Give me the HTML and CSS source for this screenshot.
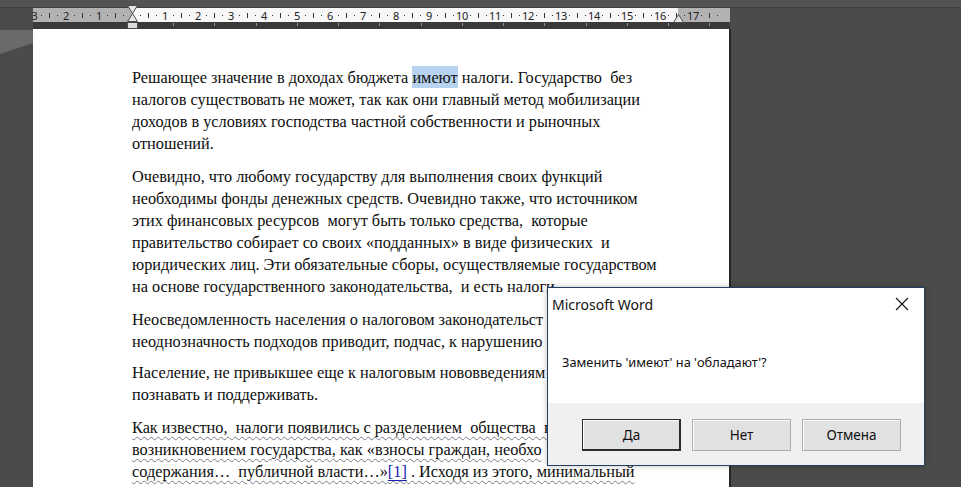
FILE: index.html
```html
<!DOCTYPE html>
<html lang="ru">
<head>
<meta charset="utf-8">
<title>Microsoft Word</title>
<link rel="stylesheet" href="styles.css">
</head>
<body>
<div class="top"></div>
<div class="ruler-row">
  <div class="ruler">
    <div class="marks">
      <span class="n">3</span><span class="q"></span><span class="h"></span><span class="q"></span>
      <span class="n">2</span><span class="q"></span><span class="h"></span><span class="q"></span>
      <span class="n">1</span><span class="q"></span><span class="h"></span><span class="q"></span>
      <span class="n"></span><span class="q"></span><span class="h"></span><span class="q"></span>
      <span class="n">1</span><span class="q"></span><span class="h"></span><span class="q"></span>
      <span class="n">2</span><span class="q"></span><span class="h"></span><span class="q"></span>
      <span class="n">3</span><span class="q"></span><span class="h"></span><span class="q"></span>
      <span class="n">4</span><span class="q"></span><span class="h"></span><span class="q"></span>
      <span class="n">5</span><span class="q"></span><span class="h"></span><span class="q"></span>
      <span class="n">6</span><span class="q"></span><span class="h"></span><span class="q"></span>
      <span class="n">7</span><span class="q"></span><span class="h"></span><span class="q"></span>
      <span class="n">8</span><span class="q"></span><span class="h"></span><span class="q"></span>
      <span class="n">9</span><span class="q"></span><span class="h"></span><span class="q"></span>
      <span class="n">10</span><span class="q"></span><span class="h"></span><span class="q"></span>
      <span class="n">11</span><span class="q"></span><span class="h"></span><span class="q"></span>
      <span class="n">12</span><span class="q"></span><span class="h"></span><span class="q"></span>
      <span class="n">13</span><span class="q"></span><span class="h"></span><span class="q"></span>
      <span class="n">14</span><span class="q"></span><span class="h"></span><span class="q"></span>
      <span class="n">15</span><span class="q"></span><span class="h"></span><span class="q"></span>
      <span class="n">16</span><span class="q"></span><span class="h"></span><span class="q"></span>
      <span class="n">17</span><span class="q"></span><span class="h"></span><span class="q"></span>
    </div>
  </div>
  <div class="tabs"></div>
  <svg class="indent-left" width="12" height="24" viewBox="0 0 12 24">
    <polygon points="0.5,0.5 10.5,0.5 5.5,8.5" fill="#e6e6e6" stroke="#4a4a4a"/>
    <polygon points="5.5,8.5 10.5,16.5 0.5,16.5" fill="#e6e6e6" stroke="#4a4a4a"/>
    <rect x="0.5" y="17.5" width="10" height="6" fill="#dcdcdc" stroke="#4a4a4a"/>
  </svg>
  <svg class="indent-right" width="12" height="10" viewBox="0 0 12 10">
    <polygon points="5.5,0.5 10.5,8.5 0.5,8.5" fill="#e6e6e6" stroke="#4a4a4a"/>
  </svg>
</div>
<div class="workspace">
  <div class="gutter">
    <svg width="33" height="40" viewBox="0 0 33 40"><polygon points="0,1 33,1 33,14 0,25" fill="#6a6a6a"/></svg>
  </div>
  <div class="page">
    <div class="para">
      <div class="ln">Решающее значение в доходах бюджета <span class="sel">имеют</span> налоги. Государство  без</div>
      <div class="ln">налогов существовать не может, так как они главный метод мобилизации</div>
      <div class="ln">доходов в условиях господства частной собственности и рыночных</div>
      <div class="ln">отношений.</div>
    </div>
    <div class="para">
      <div class="ln">Очевидно, что любому государству для выполнения своих функций</div>
      <div class="ln">необходимы фонды денежных средств. Очевидно также, что источником</div>
      <div class="ln">этих финансовых ресурсов  могут быть только средства,  которые</div>
      <div class="ln">правительство собирает со своих «подданных» в виде физических  и</div>
      <div class="ln">юридических лиц. Эти обязательные сборы, осуществляемые государством</div>
      <div class="ln">на основе государственного законодательства,  и есть налоги.</div>
    </div>
    <div class="para p3">
      <div class="ln">Неосведомленность населения о налоговом законодательст</div>
      <div class="ln">неоднозначность подходов приводит, подчас, к нарушению</div>
    </div>
    <div class="para">
      <div class="ln">Население, не привыкшее еще к налоговым нововведениям</div>
      <div class="ln">познавать и поддерживать.</div>
    </div>
    <div class="para wavy">
      <div class="ln">Как известно,  налоги появились с разделением  общества  на</div>
      <div class="ln">возникновением государства, как «взносы граждан, необхо</div>
      <div class="ln">содержания…  публичной власти…»<a class="ref">[1]</a> . Исходя из этого, минимальный</div>
    </div>
  </div>
</div>

<div class="dialog">
  <div class="dlg-body">
    <div class="dlg-title">
      <span>Microsoft Word</span>
      <svg class="close" width="14" height="14" viewBox="0 0 14 14"><path d="M1 1 L13 13 M13 1 L1 13" stroke="#111" stroke-width="1.1" fill="none"/></svg>
    </div>
    <div class="dlg-msg">Заменить 'имеют' на 'обладают'?</div>
  </div>
  <div class="dlg-buttons">
    <button class="btn default">Да</button>
    <button class="btn">Нет</button>
    <button class="btn">Отмена</button>
  </div>
</div>
</body>
</html>
```
FILE: styles.css
```css
* { box-sizing: border-box; }
html, body {
  margin: 0;
  padding: 0;
  width: 961px;
  height: 487px;
  overflow: hidden;
  background: #4b4b4b;
}
.top {
  height: 8px;
  background: #535353;
  border-bottom: 1px solid #3f3f3f;
}
.ruler-row {
  position: relative;
  margin-left: 33px;
  width: 697px;
}
.ruler {
  height: 14px;
  overflow: hidden;
  background: linear-gradient(to right, #b2b2b2 0, #b2b2b2 99px, #f7f7f7 99px, #f7f7f7 645px, #b2b2b2 645px);
}
.marks {
  display: flex;
  margin-left: -1px;
  height: 14px;
}
.marks span {
  flex: none;
  width: 8.25px;
  height: 14px;
  display: flex;
  align-items: center;
  justify-content: center;
}
.marks span:first-child {
  width: 5.1px;
}
.n {
  font-family: "Noto Sans", "DejaVu Sans", sans-serif;
  font-size: 11px;
  color: #222;
  white-space: nowrap;
  letter-spacing: -0.3px;
}
.q::before {
  content: "";
  width: 1px;
  height: 1px;
  background: #333;
}
.h::before {
  content: "";
  width: 1px;
  height: 5px;
  background: #333;
}
.tabs {
  height: 7px;
  background-color: #3a3a3a;
  background-image: repeating-linear-gradient(to right, #8c8c8c 0, #8c8c8c 1px, transparent 1px, transparent 41.25px);
  background-size: 537px 3px;
  background-position: 140px 1px;
  background-repeat: no-repeat;
}
.indent-left {
  position: absolute;
  left: 94px;
  top: -3px;
}
.indent-right {
  position: absolute;
  left: 640px;
  top: 6px;
}
.workspace {
  display: flex;
  align-items: flex-start;
}
.gutter {
  width: 33px;
  flex: none;
}
.gutter svg { display: block; }
.page {
  width: 698px;
  height: 470px;
  background: #fff;
  border-right: 2px solid #262626;
  padding: 38px 0 0 99px;
  font-family: "Liberation Serif", "Times New Roman", serif;
  font-size: 16.3px;
  line-height: 22px;
  color: #0e0e0e;
}
.para { margin-bottom: 11px; }
.para.p3 { margin-bottom: 9px; }
.ln { white-space: pre; }
.sel {
  background: #b7d3f0;
  padding: 2px 0 1px;
}
.wavy .ln {
  text-decoration: underline wavy #7a7a8a;
  text-decoration-thickness: 1px;
  text-underline-offset: 3px;
}
.ref {
  color: #1a24b0;
  text-decoration: underline;
}
.dialog {
  position: absolute;
  left: 547px;
  top: 287px;
  width: 378px;
  height: 179px;
  border: 1px solid #1f3f66;
  background: #fff;
  display: flex;
  flex-direction: column;
  font-family: "Noto Sans", "Open Sans", sans-serif;
  color: #111;
  box-shadow: 0 0 6px rgba(0,0,0,0.25);
}
.dlg-body {
  height: 115px;
  flex: none;
}
.dlg-title {
  display: flex;
  align-items: center;
  justify-content: space-between;
  height: 32px;
  padding: 0 15px 0 4px;
  font-size: 14px;
}
.close { display: block; }
.dlg-msg {
  margin-top: 33px;
  padding-left: 14px;
  font-size: 12.8px;
}
.dlg-buttons {
  flex: 1;
  background: #f0f0f0;
  display: flex;
  gap: 11px;
  padding: 16px 0 0 34px;
}
.btn {
  width: 99px;
  height: 32px;
  background: #e1e1e1;
  border: 1px solid #adadad;
  box-shadow: inset 1px 1px 0 #fdfdfd;
  font-family: "Noto Sans", "Open Sans", sans-serif;
  font-size: 13.5px;
  color: #111;
  padding: 0;
}
.btn.default {
  border: 1px solid #2c2c2c;
  box-shadow: inset -1px -1px 0 #2c2c2c, inset 1px 1px 0 #fdfdfd;
}
```
